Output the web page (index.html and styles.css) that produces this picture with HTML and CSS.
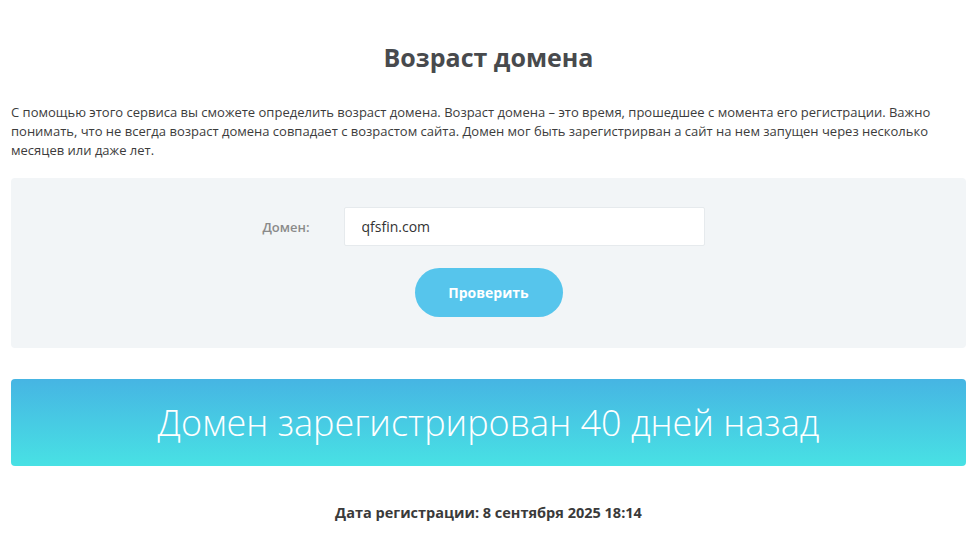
FILE: index.html
```html
<!DOCTYPE html>
<html lang="ru">
<head>
<meta charset="utf-8">
<title>Возраст домена</title>
<link rel="stylesheet" href="styles.css">
</head>
<body>
<div class="page">
  <h1 class="title">Возраст домена</h1>
  <p class="intro">С помощью этого сервиса вы сможете определить возраст домена. Возраст домена – это время, прошедшее с момента его регистрации. Важно понимать, что не всегда возраст домена совпадает с возрастом сайта. Домен мог быть зарегистрирван а сайт на нем запущен через несколько месяцев или даже лет.</p>
  <form class="check-box">
    <div class="field-row">
      <label class="field-label" for="domain">Домен:</label>
      <input class="field-input" id="domain" type="text" value="qfsfin.com">
    </div>
    <button class="check-btn" type="button">Проверить</button>
  </form>
  <div class="result-banner">Домен зарегистрирован 40 дней назад</div>
  <div class="reg-date">Дата регистрации: 8 сентября 2025 18:14</div>
</div>
</body>
</html>
```

FILE: styles.css
```css
html, body {
  margin: 0;
  padding: 0;
  background: #ffffff;
}
.page {
  padding: 0 2px 0 11px;
  font-family: "Open Sans", "Liberation Sans", sans-serif;
  color: #3a3a3a;
}
.title {
  margin: 0;
  padding-top: 42px;
  font-size: 25px;
  line-height: 30px;
  font-weight: 700;
  color: #484a4d;
  text-align: center;
}
.intro {
  margin: 31px 0 0;
  font-size: 13px;
  line-height: 19px;
  font-weight: 500;
  color: #3c3c3c;
}
.check-box {
  margin: 18px 0 0;
  height: 170px;
  box-sizing: border-box;
  padding-top: 29px;
  background: #f2f5f7;
  border-radius: 4px;
  display: flex;
  flex-direction: column;
  align-items: center;
  gap: 22px;
}
.field-row {
  display: flex;
  align-items: center;
  gap: 34px;
  padding-right: 10px;
}
.field-label {
  font-size: 13px;
  font-weight: 600;
  color: #8a8a8a;
}
.field-input {
  width: 361px;
  height: 39px;
  box-sizing: border-box;
  border: 1px solid #e6eaed;
  border-radius: 2px;
  background: #ffffff;
  padding: 0 17px;
  font-family: inherit;
  font-size: 14px;
  font-weight: 500;
  color: #333333;
  outline: none;
}
.check-btn {
  width: 148px;
  height: 49px;
  border: none;
  border-radius: 25px;
  background: #56c5ec;
  color: #ffffff;
  font-family: inherit;
  font-size: 14px;
  font-weight: 700;
  cursor: pointer;
}
.result-banner {
  margin-top: 31px;
  height: 87px;
  border-radius: 4px;
  background: linear-gradient(to bottom, #46b5e3, #48e1e4);
  color: #ffffff;
  font-size: 36px;
  font-weight: 300;
  display: flex;
  align-items: center;
  justify-content: center;
}
.reg-date {
  margin-top: 37px;
  text-align: center;
  font-size: 14.5px;
  line-height: 20px;
  font-weight: 700;
  color: #3a3a3a;
}
```
